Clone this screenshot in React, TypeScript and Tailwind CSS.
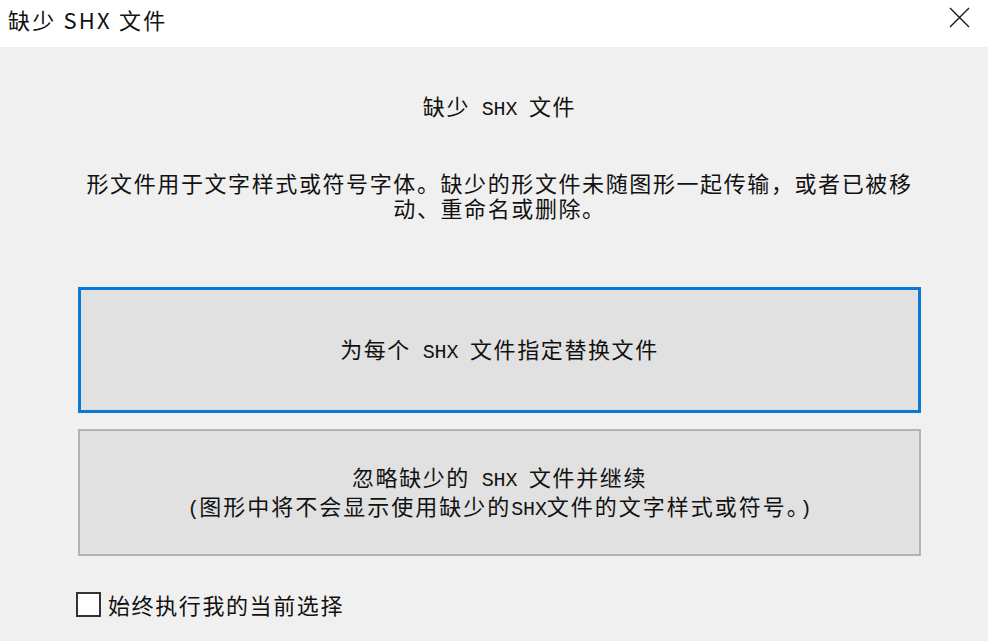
import React from "react";

const cjk = { fontFamily: '"Noto Sans CJK SC", sans-serif' };
const mono = { fontFamily: '"Liberation Mono", monospace' };

function M({ text }: { text: string }) {
  const parts = text.split(/([\x20-\x7e]+)/);
  return (
    <>
      {parts.map((p, i) =>
        /^[\x20-\x7e]+$/.test(p) ? (
          <span key={i} className="text-[20px] tracking-[-0.2px] whitespace-pre" style={mono}>
            {p}
          </span>
        ) : (
          <span key={i}>{p}</span>
        )
      )}
    </>
  );
}

export default function App() {
  return (
    <div className="w-[988px] h-[641px] bg-[#f0f0f0] flex flex-col text-[#111] overflow-hidden" style={cjk}>
      <div className="h-[47px] shrink-0 bg-white flex items-start justify-between pl-[8px] pr-[18px] pt-[7px]">
        <span className="text-[22px] leading-[24px] tracking-[2.2px]">缺少 SHX 文件</span>
        <svg width="21" height="21" viewBox="0 0 21 21">
          <path d="M1 1 L20 20 M20 1 L1 20" stroke="#1a1a1a" strokeWidth="1.4" />
        </svg>
      </div>
      <div className="ml-[78px] w-[843px] flex flex-col items-center text-[22px] tracking-[1.6px]">
        <div className="mt-[46px] h-[25px] leading-[25px] whitespace-pre">
          <M text="缺少 SHX 文件" />
        </div>
        <div className="mt-[52px] w-full text-center leading-[25px]">
          形文件用于文字样式或符号字体。缺少的形文件未随图形一起传输，或者已被移动、重命名或删除。
        </div>
        <button className="mt-[67px] w-full h-[126px] bg-[#e1e1e1] border-[3px] border-[#0a78d4] flex items-center justify-center leading-[25px] tracking-[1.6px] text-[#111]">
          <span className="whitespace-pre">
            <M text="为每个 SHX 文件指定替换文件" />
          </span>
        </button>
        <button className="mt-[16px] w-full h-[127px] bg-[#e1e1e1] border-[2px] border-[#b3b3b3] flex flex-col items-center justify-center leading-[25px] tracking-[1.6px] text-[#111]">
          <span className="whitespace-pre">
            <M text="忽略缺少的 SHX 文件并继续" />
          </span>
          <span className="whitespace-pre tracking-[2px]">
            <M text="(图形中将不会显示使用缺少的SHX文件的文字样式或符号。)" />
          </span>
        </button>
        <div className="self-start -ml-[2px] mt-[36px] h-[25px] flex items-center gap-[7px]">
          <div className="w-[25px] h-[25px] bg-white border-[2px] border-[#333]" />
          <span className="leading-[25px]">始终执行我的当前选择</span>
        </div>
      </div>
    </div>
  );
}
